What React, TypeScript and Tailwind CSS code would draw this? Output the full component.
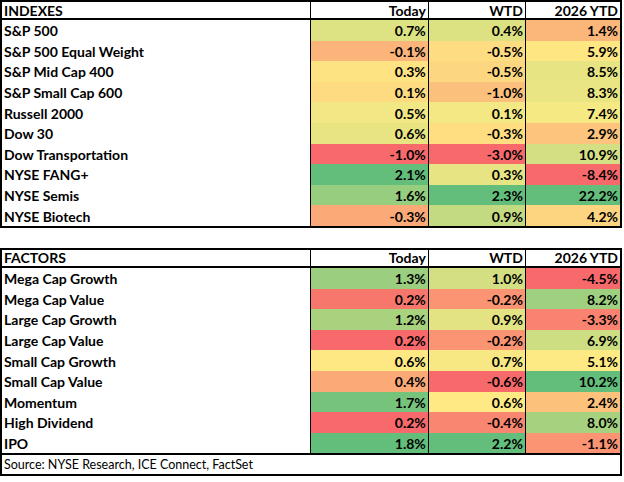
import React from "react";

type Row = { name: string; cells: [string, string][] };

const indexes: Row[] = [
  { name: "S&P 500", cells: [["0.7%", "#DDE283"], ["0.4%", "#DCE182"], ["1.4%", "#FBB779"]] },
  { name: "S&P 500 Equal Weight", cells: [["-0.1%", "#FBB57A"], ["-0.5%", "#FEDC81"], ["5.9%", "#FEE783"]] },
  { name: "S&P Mid Cap 400", cells: [["0.3%", "#FEE382"], ["-0.5%", "#FDD780"], ["8.5%", "#E6E483"]] },
  { name: "S&P Small Cap 600", cells: [["0.1%", "#FEDB81"], ["-1.0%", "#FBC07C"], ["8.3%", "#EAE583"]] },
  { name: "Russell 2000", cells: [["0.5%", "#F1E784"], ["0.1%", "#F3E884"], ["7.4%", "#F5E984"]] },
  { name: "Dow 30", cells: [["0.6%", "#E8E482"], ["-0.3%", "#FEDE81"], ["2.9%", "#FCC47D"]] },
  { name: "Dow Transportation", cells: [["-1.0%", "#F8696B"], ["-3.0%", "#F8696B"], ["10.9%", "#D3DF82"]] },
  { name: "NYSE FANG+", cells: [["2.1%", "#63BE7B"], ["0.3%", "#E6E483"], ["-8.4%", "#F8696B"]] },
  { name: "NYSE Semis", cells: [["1.6%", "#96CD7E"], ["2.3%", "#63BE7B"], ["22.2%", "#63BE7B"]] },
  { name: "NYSE Biotech", cells: [["-0.3%", "#FBAA77"], ["0.9%", "#C4DA81"], ["4.2%", "#FDD480"]] },
];

const factors: Row[] = [
  { name: "Mega Cap Growth", cells: [["1.3%", "#9BCF7F"], ["1.0%", "#D3DF82"], ["-4.5%", "#F8696B"]] },
  { name: "Mega Cap Value", cells: [["0.2%", "#F8776D"], ["-0.2%", "#FA9473"], ["8.2%", "#9FD07F"]] },
  { name: "Large Cap Growth", cells: [["1.2%", "#A9D27F"], ["0.9%", "#E3E383"], ["-3.3%", "#F98370"]] },
  { name: "Large Cap Value", cells: [["0.2%", "#F8696B"], ["-0.2%", "#FA9473"], ["6.9%", "#CDDD82"]] },
  { name: "Small Cap Growth", cells: [["0.6%", "#FDE884"], ["0.7%", "#F7E884"], ["5.1%", "#FEEA84"]] },
  { name: "Small Cap Value", cells: [["0.4%", "#FBAA77"], ["-0.6%", "#F8696B"], ["10.2%", "#63BE7B"]] },
  { name: "Momentum", cells: [["1.7%", "#76C47C"], ["0.6%", "#FFE984"], ["2.4%", "#FCC27C"]] },
  { name: "High Dividend", cells: [["0.2%", "#F8696B"], ["-0.4%", "#F98670"], ["8.0%", "#A6D27F"]] },
  { name: "IPO", cells: [["1.8%", "#63BE7B"], ["2.2%", "#63BE7B"], ["-1.1%", "#FA9473"]] },
];

const widths = ["w-[116px]", "w-[95px]", "w-[93px]"];

function Table({ title, rows, source }: { title: string; rows: Row[]; source?: string }) {
  return (
    <div className="w-[622px] border-2 border-black bg-white">
      <div className="flex h-[18px] border-b-2 border-black">
        <div className="w-[311px] pl-[2px] flex items-center pt-[1px]">{title}</div>
        {["Today", "WTD", "2026 YTD"].map((h, i) => (
          <div key={h} className={`${widths[i]} border-l border-black flex items-center justify-end pr-[2px] pt-[1px] box-content`}>
            {h}
          </div>
        ))}
      </div>
      {rows.map((r) => (
        <div key={r.name} className="flex h-[20.6px]">
          <div className="w-[311px] pl-[2px] flex items-center pt-[2px]">{r.name}</div>
          {r.cells.map(([v, c], i) => (
            <div
              key={i}
              className={`${widths[i]} border-l border-black flex items-center justify-end pr-[2px] pt-[2px] box-content`}
              style={{ backgroundColor: c }}
            >
              {v}
            </div>
          ))}
        </div>
      ))}
      {source && (
        <div className="h-[19px] border-t-2 border-black pl-[2px] flex items-center text-[12.5px] font-normal box-content">
          {source}
        </div>
      )}
    </div>
  );
}

export default function App() {
  return (
    <div
      className="w-[624px] h-[482px] bg-white text-black font-bold text-[14px] leading-none"
      style={{ fontFamily: "Lato, 'Liberation Sans', sans-serif" }}
    >
      <div className="flex flex-col gap-[20px]">
        <Table title="INDEXES" rows={indexes} />
        <Table title="FACTORS" rows={factors} source="Source: NYSE Research, ICE Connect, FactSet" />
      </div>
    </div>
  );
}
